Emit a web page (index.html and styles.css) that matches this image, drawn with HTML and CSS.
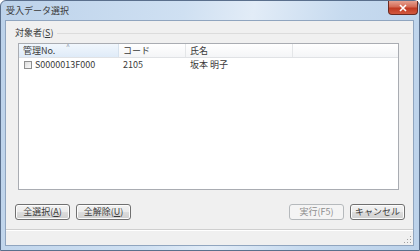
FILE: index.html
```html
<!DOCTYPE html>
<html>
<head>
	<meta charset="UTF-8">
	<link rel="stylesheet" href="styles.css">
</head>
<body>
 <div class="window">
	<div class="titlebar">
		<span class="title">受入データ選択</span>
		<div class="close">
			<svg width="10" height="8" viewBox="0 0 10 8"><path d="M2 1 L8 7 M8 1 L2 7" stroke="#fff" stroke-width="1.6"/></svg>
		</div>
	</div>

	<div class="client">
		<div class="target">
			<span class="label">対象者(<u>S</u>)</span>
			<div class="rule"></div>
		</div>

		<div class="list">
			<div class="list-head">
				<div class="col c1 sorted">管理No.<span class="arrow">^</span></div>
				<div class="col c2">コード</div>
				<div class="col c3">氏名</div>
				<div class="col c4"></div>
			</div>
			<div class="row">
				<div class="col c1"><span class="check"></span>S0000013F000</div>
				<div class="col c2">2105</div>
				<div class="col c3">坂本 明子</div>
			</div>
		</div>

		<div class="buttons">
			<div class="group">
				<div class="btn">全選択(<u>A</u>)</div>
				<div class="btn">全解除(<u>U</u>)</div>
			</div>
			<div class="group">
				<div class="btn disabled">実行(F5)</div>
				<div class="btn">キャンセル</div>
			</div>
		</div>

		<div class="status">
			<svg class="grip" width="8" height="8" viewBox="0 0 8 8">
				<rect x="6" y="0" width="1" height="1" fill="#a0a0a0"/>
				<rect x="3" y="3" width="1" height="1" fill="#a0a0a0"/>
				<rect x="6" y="3" width="1" height="1" fill="#a0a0a0"/>
				<rect x="0" y="6" width="1" height="1" fill="#a0a0a0"/>
				<rect x="3" y="6" width="1" height="1" fill="#a0a0a0"/>
				<rect x="6" y="6" width="1" height="1" fill="#a0a0a0"/>
			</svg>
		</div>
	</div>
 </div>
</body>
</html>
```

FILE: styles.css
```css
* {
	margin: 0;
	padding: 0;
	box-sizing: border-box;
}
body {
	width: 420px;
	height: 251px;
	background: #fff;
	font: 9px "Noto Sans CJK JP", "Noto Sans", sans-serif;
	color: #3a3a3a;
}
u {
	text-decoration: underline;
}
.window {
	width: 420px;
	height: 251px;
	border: 1px solid #5a6f8c;
	border-radius: 6px 6px 0 0;
	background: linear-gradient(100deg, #bcd2ea 0%, #cfe0f2 40%, #e2ecf7 55%, #c6daef 75%, #bcd2ea 100%);
	padding: 0 5px 4px 4px;
	display: flex;
	flex-direction: column;
}
.titlebar {
	height: 19px;
	display: flex;
	align-items: center;
	justify-content: space-between;
}
.title {
	padding-left: 1px;
	font-size: 9px;
	color: #3a3a3a;
}
.close {
	width: 30px;
	height: 14px;
	margin-top: -5px;
	margin-right: -4px;
	border: 1px solid #6b2a21;
	border-top: none;
	border-radius: 0 0 4px 4px;
	background: linear-gradient(#e6a190 0%, #d46a55 45%, #c03a22 55%, #d2593f 100%);
	display: flex;
	align-items: center;
	justify-content: center;
}
.client {
	flex: 1;
	background: #f0f0f0;
	border: 1px solid #90a5bf;
	display: flex;
	flex-direction: column;
}
.target {
	height: 22px;
	display: flex;
	align-items: flex-start;
	padding-top: 6px;
}
.label {
	padding-left: 9px;
	line-height: 12px;
}
.rule {
	flex: 1;
	margin: 6px 2px 0 4px;
	border-top: 1px solid #dcdcdc;
}
.list {
	margin: 0 14px 0 12px;
	height: 147px;
	background: #fff;
	border: 1px solid #a9acb2;
}
.list-head {
	display: flex;
	height: 14px;
	background: linear-gradient(#ffffff, #f4f5f7);
	border-bottom: 1px solid #e0e2e5;
}
.list-head .col {
	border-right: 1px solid #e4e6e8;
	line-height: 13px;
	position: relative;
}
.list-head .sorted {
	background: linear-gradient(#f1f7fd, #dfebf8);
	border-right-color: #d6e2ee;
}
.arrow {
	position: absolute;
	left: 47px;
	top: -4px;
	font-size: 7px;
	color: #8c9bab;
}
.col {
	padding-left: 4px;
	white-space: nowrap;
}
.c1 {
	width: 100px;
}
.c2 {
	width: 67px;
}
.c3 {
	width: 107px;
}
.c4 {
	flex: 1;
	border-right: none !important;
}
.row {
	display: flex;
	height: 14px;
	line-height: 14px;
}
.check {
	display: inline-block;
	width: 8px;
	height: 8px;
	margin: 0 3px 0 1px;
	vertical-align: -1px;
	border: 1px solid #8f8f8f;
	background: linear-gradient(135deg, #dcdcdc, #fafafa);
}
.buttons {
	margin-top: 14px;
	display: flex;
	justify-content: space-between;
	padding: 0 8px 0 9px;
}
.group {
	display: flex;
	gap: 6px;
}
.btn {
	width: 55px;
	height: 16px;
	line-height: 14px;
	text-align: center;
	border: 1px solid #707070;
	border-radius: 3px;
	background: linear-gradient(#f2f2f2 0%, #ebebeb 50%, #dddddd 51%, #cfcfcf 100%);
	box-shadow: inset 0 0 0 1px #fcfcfc;
}
.btn.disabled {
	color: #8d8d8d;
	border-color: #b5b9bc;
	background: #f4f4f4;
	box-shadow: none;
}
.status {
	flex: 1;
	margin-top: 9px;
	border-top: 1px solid #cfcfcf;
	box-shadow: inset 0 1px 0 #fff;
	display: flex;
	justify-content: flex-end;
	align-items: flex-end;
	padding: 0 1px 1px 0;
}
```
